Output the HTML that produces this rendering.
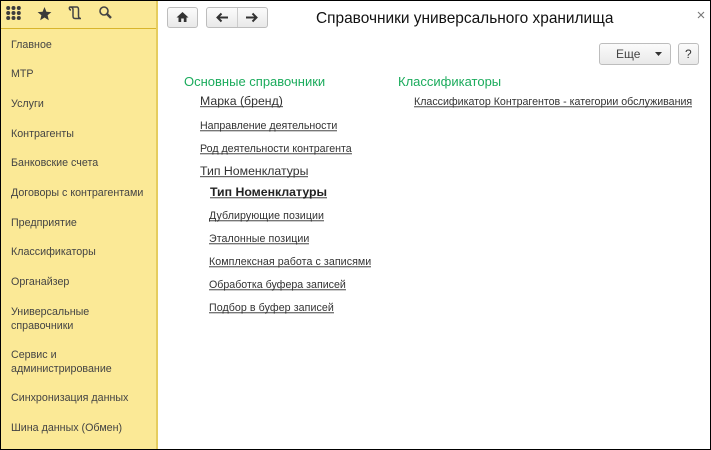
<!DOCTYPE html>
<html lang="ru"><head><meta charset="utf-8"><title>Справочники</title>
<style>
html,body{margin:0;padding:0;width:711px;height:450px;overflow:hidden;background:#fff}
body{position:relative;font-family:"Liberation Sans",sans-serif;color:#333}
.t{position:absolute;white-space:nowrap;line-height:14px}
#side{position:absolute;left:1px;top:1px;width:155px;height:448px;background:#fbe996;border-right:2px solid #e6cd5f}
#hr{position:absolute;left:1px;top:28px;width:155px;height:1px;background:#d9b52c}
.m{font-size:10.7px;color:#444;left:11px}
.l{color:#333;font-size:10.65px;border-bottom:1px solid #777;box-shadow:0 1px 0 #ccc;line-height:12px;height:10px}
.s{letter-spacing:.07px}
.b{font-size:12.3px;line-height:15px;height:12px;border-bottom:1px solid #666;box-shadow:0 1px 0 #ddd;color:#333}
.g{font-size:13px;color:#1bab5c}
.btn{position:absolute;box-sizing:border-box;border:1px solid #bdbdbd;border-radius:3px;background:linear-gradient(#fbfbfb,#e9e9e9)}
#edge{position:absolute;left:0;top:0;width:709px;height:448px;border:1px solid #000;pointer-events:none}
svg{position:absolute}
</style></head><body>
<div id="side"></div><div id="hr"></div>

<svg style="left:6px;top:6px" width="15" height="14" viewBox="0 0 15 14" fill="#3d3d3d">
<circle cx="2.200" cy="2" r="2"/><circle cx="7.500" cy="2" r="2"/><circle cx="12.800" cy="2" r="2"/>
<circle cx="2.200" cy="7" r="2"/><circle cx="7.500" cy="7" r="2"/><circle cx="12.800" cy="7" r="2"/>
<circle cx="2.200" cy="12" r="2"/><circle cx="7.500" cy="12" r="2"/><circle cx="12.800" cy="12" r="2"/></svg>
<svg style="left:37px;top:6px" width="15" height="15" viewBox="0 0 15 15"><path d="M7.500 1l1.900 4.700 5 .4-3.800 3.200 1.200 4.900-4.300-2.700-4.300 2.700 1.200-4.900L.6 6.100l5-.4z" fill="#3a3a3a"/></svg>
<svg style="left:68px;top:5px" width="15" height="15" viewBox="0 0 15 15" fill="none" stroke="#444" stroke-width="1.500"><path d="M2 2h7c1.500 0 1.500 1.500 1.500 3v6c0 1.500 1 2.500 2.500 2.500H7c-1.500 0-2-1-2-2.500V4.500C5 3 4 2 2 2zM2 2C1 2 1 5 3 5"/></svg>
<svg style="left:98px;top:5px" width="15" height="15" viewBox="0 0 15 15" fill="none" stroke="#444"><circle cx="6" cy="6" r="4" stroke-width="1.600"/><path d="M9 9l4 4" stroke-width="2.400"/></svg>

<div class="t m" style="top:38px">Главное</div>
<div class="t m" style="top:67px">МТР</div>
<div class="t m" style="top:97px">Услуги</div>
<div class="t m" style="top:127px">Контрагенты</div>
<div class="t m" style="top:156px">Банковские счета</div>
<div class="t m" style="top:186px">Договоры с контрагентами</div>
<div class="t m" style="top:216px">Предприятие</div>
<div class="t m" style="top:245px">Классификаторы</div>
<div class="t m" style="top:275px">Органайзер</div>
<div class="t m" style="top:305px">Универсальные</div>
<div class="t m" style="top:319px">справочники</div>
<div class="t m" style="top:348px">Сервис и</div>
<div class="t m" style="top:362px">администрирование</div>
<div class="t m" style="top:391px">Синхронизация данных</div>
<div class="t m" style="top:421px">Шина данных (Обмен)</div>

<div class="btn" style="left:167px;top:7px;width:31px;height:21px"></div>
<svg style="left:176px;top:11px" width="13" height="12" viewBox="0 0 13 12"><path d="M6.500 1L0.500 6.500H2.500V11H5.200V7.500H7.800V11H10.500V6.500H12.500z" fill="#333"/></svg>
<div class="btn" style="left:206px;top:7px;width:62px;height:21px"></div>
<div style="position:absolute;left:237px;top:8px;width:1px;height:19px;background:#ccc"></div>
<svg style="left:216px;top:12px" width="13" height="11" viewBox="0 0 13 11"><path d="M1 5.500h11M5.500 1.500L1.500 5.500l4 4" fill="none" stroke="#333" stroke-width="2"/></svg>
<svg style="left:245px;top:12px" width="13" height="11" viewBox="0 0 13 11"><path d="M1 5.500h11M7.500 1.500l4 4-4 4" fill="none" stroke="#333" stroke-width="2"/></svg>

<div class="t" style="left:316px;top:10px;font-size:15.45px;line-height:18px;color:#111">Справочники универсального хранилища</div>
<svg style="left:697px;top:11px" width="8" height="8" viewBox="0 0 8 8"><path d="M1 1l6 6M7 1L1 7" stroke="#777" stroke-width="1.100"/></svg>

<div class="btn" style="left:599px;top:43px;width:72px;height:22px"></div>
<div class="t" style="left:616px;top:47px;font-size:12px;color:#444">Еще</div>
<svg style="left:655px;top:52px" width="7" height="4" viewBox="0 0 7 4"><path d="M0 0h7L3.500 4z" fill="#333"/></svg>
<div class="btn" style="left:678px;top:43px;width:21px;height:22px"></div>
<div class="t" style="left:685px;top:47px;font-size:12px;color:#333">?</div>

<div class="t g" style="left:184px;top:75px">Основные справочники</div>
<div class="t b" style="left:200px;top:94px">Марка (бренд)</div>
<div class="t l" style="left:200px;top:120px">Направление деятельности</div>
<div class="t l" style="left:200px;top:143px">Род деятельности контрагента</div>
<div class="t b" style="left:200px;top:164px">Тип Номенклатуры</div>
<div class="t l" style="left:210px;top:185px;font-size:12.3px;font-weight:bold;line-height:14px;height:12px;color:#222">Тип Номенклатуры</div>
<div class="t l s" style="left:209px;top:210px">Дублирующие позиции</div>
<div class="t l s" style="left:209px;top:233px">Эталонные позиции</div>
<div class="t l s" style="left:209px;top:256px">Комплексная работа с записями</div>
<div class="t l" style="left:209px;top:279px">Обработка буфера записей</div>
<div class="t l s" style="left:209px;top:302px">Подбор в буфер записей</div>

<div class="t g" style="left:398px;top:75px">Классификаторы</div>
<div class="t l" style="left:414px;top:96px">Классификатор Контрагентов - категории обслуживания</div>
<div id="edge"></div>
</body></html>
